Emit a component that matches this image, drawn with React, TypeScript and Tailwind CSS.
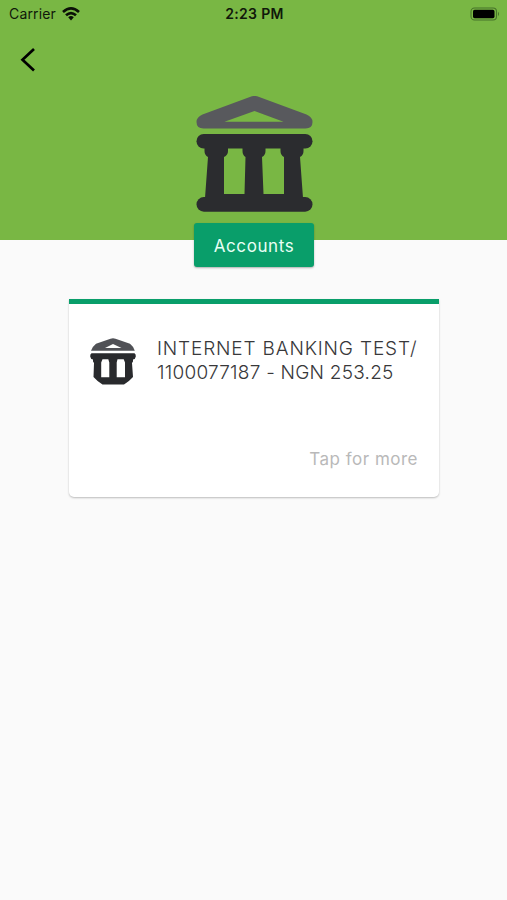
import { useState } from 'react';

const accounts = [
    { name: 'INTERNET BANKING TEST/', details: '1100077187 - NGN 253.25' },
];

function BankIcon({ className }: { className?: string }) {
    return (
        <svg viewBox="0 0 116 116" className={className} aria-hidden="true">
            <path
                fill="#58595d"
                fillRule="evenodd"
                d="M54 0.7Q58 -0.8 62 0.7L110 18.5Q116 21 116 26Q116 32.5 109 32.5H7Q0 32.5 0 26Q0 21 6 18.5ZM58 15L28 25.8H87Z"
            />
            <g fill="#2b2c2f">
                <rect x="0" y="38" width="116" height="14.5" rx="7.2" />
                <rect x="0" y="101" width="116" height="14.7" rx="7.3" />
                <path d="M8 51H31.5V55Q31.5 59 27.5 61V98H48L49 61Q46 59 46 55V51H69V55Q69 59 65.5 61L67 98H87.5V61Q84 59 84 55V51H107V55Q107 59 103.5 61L106.5 102H8.5L11.5 61Q8 59 8 55Z" />
            </g>
        </svg>
    );
}

// Compact version for list rows, with the outer corners rounded off
function BankBadge({ className }: { className?: string }) {
    return (
        <svg viewBox="0 0 46 47" className={className} aria-hidden="true">
            <path
                fill="#505156"
                fillRule="evenodd"
                d="M20.5 0.8Q23 -0.4 25.5 0.8L40 5.8Q44 9 44.8 12.8H1Q2 9 6 5.8ZM23 6L15 10H31.5Z"
            />
            <path
                fill="#292a2d"
                fillRule="evenodd"
                d="M1.5 15.2H44.5Q46 16 45.8 18.5Q45.5 21 43 21.5V23.5L42 25L43 39Q38.5 44 34 46.6H12.5Q8 44 3.5 39L4 25L3 23.5V21.5Q0.5 21 0.2 18.5Q0 16 1.5 15.2ZM12.5 21.2L11.2 24.5V39.2H19.3V24.5L18.3 21.2ZM27.5 21.2L26.7 24.5V39.2H35V24.5L33.7 21.2Z"
            />
        </svg>
    );
}

function StatusBar() {
    return (
        <div className="grid h-7 shrink-0 grid-cols-3 items-center pb-px pl-[9px] pr-[7px] text-[#10180a]">
            <div className="flex items-center gap-[6px] text-[14px] tracking-[0.15px]">
                <span>Carrier</span>
                <svg viewBox="0 0 18 14" className="h-[14px] w-[18px]" fill="none" stroke="#0b1007" strokeWidth="2.7">
                    <path d="M1 4.9Q9 -2 17 4.9" />
                    <path d="M4 8.3Q9 3.8 14 8.3" />
                    <path d="M6.2 10.2Q9 7.8 11.8 10.2L9 13.4Z" fill="#0b1007" stroke="none" />
                </svg>
            </div>
            <span className="text-center text-[14px] font-semibold tracking-[0.3px]">2:23 PM</span>
            <svg viewBox="0 0 30 14" className="h-[14px] w-[30px] justify-self-end">
                <rect x="1" y="1" width="25.5" height="12" rx="3.5" fill="none" stroke="#47732a" strokeWidth="1.1" />
                <rect x="3" y="2.8" width="21.5" height="8.4" rx="1.6" fill="#000" />
                <path d="M28 4.8Q30 7 28 9.2Z" fill="#47732a" />
            </svg>
        </div>
    );
}

export default function App() {
    const [selected, setSelected] = useState<number | null>(null);

    return (
        <main className="flex min-h-screen flex-col bg-[#fafafa] font-['Inter','Liberation_Sans',sans-serif]">
            <header className="flex h-[240px] flex-col bg-[#79b744]">
                <StatusBar />
                <button aria-label="Back" className="ml-[19px] mt-[18px] h-7 w-[18px] shrink-0">
                    <svg viewBox="0 0 18 28" className="h-7 w-[18px]" fill="none" stroke="#000" strokeWidth="2.7">
                        <path d="M15 3L3.5 13.8L15 24.6" />
                    </svg>
                </button>
                <BankIcon className="ml-[196px] mt-[22px] h-[116px] w-[117px] shrink-0" />
                <button className="ml-[194px] mt-[11px] h-11 w-[120px] shrink-0 rounded-[3px] bg-[#099e6a] pt-[3px] text-[17px] text-[#e8fff5] shadow-[0_1px_2px_rgba(0,0,0,0.3)]">
                    <span className="tracking-[0.6px]">Accounts</span>
                </button>
            </header>

            <section className="mt-[59px] pl-[69px] pr-[68px]">
                {accounts.map((account, index) => (
                    <article
                        key={account.details}
                        onClick={() => setSelected(selected === index ? null : index)}
                        className="flex h-[198px] flex-col justify-between rounded-b-[5px] border-t-[5px] border-[#099e6a] bg-white px-[21px] pb-[26px] pt-[33px] shadow-[0_1px_2px_rgba(0,0,0,0.25)]"
                    >
                        <div className="flex">
                            <BankBadge className="mt-px h-[47px] w-[46px] shrink-0" />
                            <div className="ml-[21px] whitespace-nowrap text-[19px] leading-6 text-[#38383a]">
                                <p className="font-light tracking-[0.84px]">{account.name}</p>
                                <p className="font-light tracking-[0.24px]">{account.details}</p>
                            </div>
                        </div>
                        <p className="text-right text-[17px] leading-6 tracking-[0.5px] text-[#b9b9b9]">Tap for more</p>
                    </article>
                ))}
            </section>
        </main>
    );
}
